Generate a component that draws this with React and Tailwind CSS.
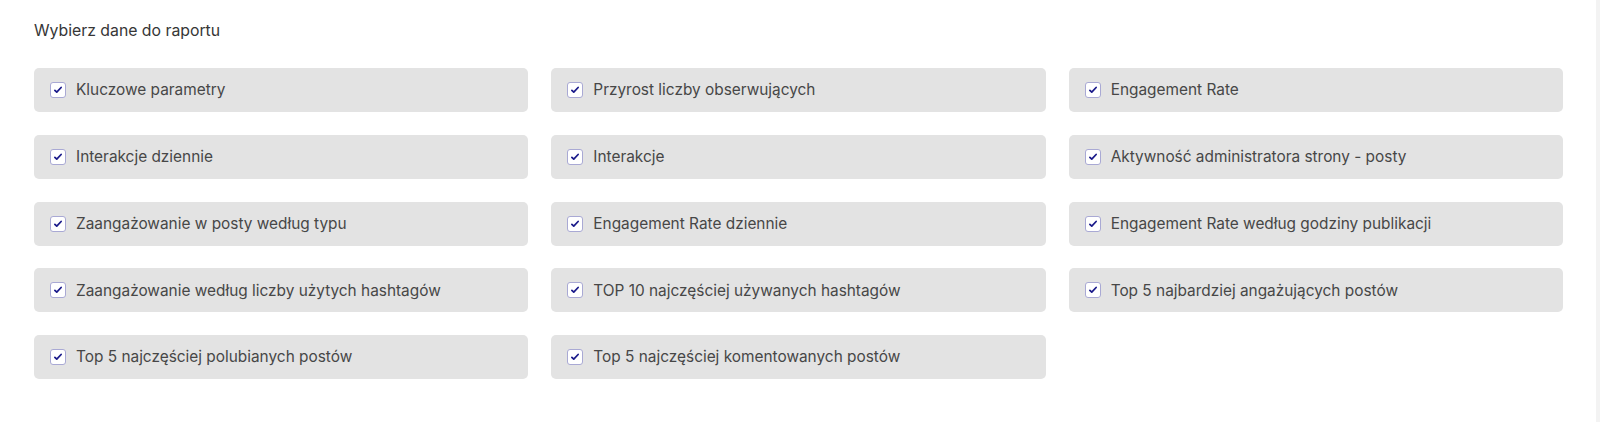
import React from "react";

const items = [
  "Kluczowe parametry",
  "Przyrost liczby obserwujących",
  "Engagement Rate",
  "Interakcje dziennie",
  "Interakcje",
  "Aktywność administratora strony - posty",
  "Zaangażowanie w posty według typu",
  "Engagement Rate dziennie",
  "Engagement Rate według godziny publikacji",
  "Zaangażowanie według liczby użytych hashtagów",
  "TOP 10 najczęściej używanych hashtagów",
  "Top 5 najbardziej angażujących postów",
  "Top 5 najczęściej polubianych postów",
  "Top 5 najczęściej komentowanych postów",
];

function CheckBox() {
  return (
    <span className="flex h-4 w-4 shrink-0 items-center justify-center rounded-[3px] border border-[#a9a9d4] bg-white">
      <svg viewBox="0 0 16 16" className="h-[10px] w-[10px]" fill="none">
        <path
          d="M3 8.5l3 3 7-7.5"
          stroke="#1a1a8a"
          strokeWidth="2.8"
          strokeLinecap="round"
          strokeLinejoin="round"
        />
      </svg>
    </span>
  );
}

export default function App() {
  return (
    <div className="flex h-[422px] w-[1600px] bg-[#f3f3f3]" style={{ fontFamily: "Inter, 'Noto Sans', sans-serif" }}>
      <div className="h-full w-[1596px] bg-white pl-[34px] pr-[33px] pt-[21px]">
        <h2 className="text-[15.8px] font-normal leading-[20px] text-[#363636]">
          Wybierz dane do raportu
        </h2>
        <div className="mt-[27px] grid grid-cols-3 gap-x-[23px] gap-y-[22.75px]">
          {items.map((label) => (
            <label
              key={label}
              className="flex h-[44px] items-center gap-[10px] rounded-[5px] bg-[#e3e3e3] pl-[16px] text-[15.4px] text-[#474747]"
            >
              <CheckBox />
              <span>{label}</span>
            </label>
          ))}
        </div>
      </div>
    </div>
  );
}
